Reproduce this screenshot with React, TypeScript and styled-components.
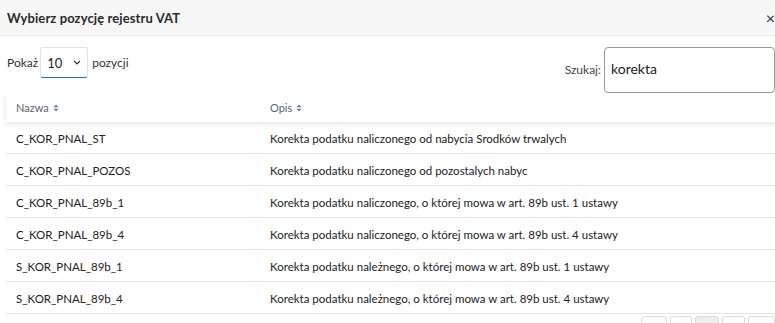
import React from "react";
import styled, { createGlobalStyle } from "styled-components";

const Global = createGlobalStyle`
  html, body { margin: 0; padding: 0; background: #fff; overflow: hidden; }
  body { font-family: "Lato", "Open Sans", sans-serif; color: #222; }
  * { box-sizing: border-box; }
`;

const Modal = styled.div`
  width: 778px;
  height: 323px;
  overflow: hidden;
  background: #fff;
`;

const Header = styled.div`
  height: 36px;
  display: flex;
  align-items: center;
  justify-content: space-between;
  padding: 0 3px 0 7px;
  background: #f7f7f7;
  border-bottom: 1px solid #e9e9e9;
`;

const Title = styled.h4`
  margin: 0;
  font-size: 13px;
  font-weight: 700;
  color: #2b2b2b;
  letter-spacing: 0.1px;
`;

const Close = styled.span`
  font-size: 16px;
  color: #333;
  line-height: 1;
`;

const Body = styled.div`
  padding: 11px 3px 0 6px;
`;

const Controls = styled.div`
  display: flex;
  justify-content: space-between;
  align-items: flex-start;
`;

const Group = styled.label`
  display: flex;
  align-items: center;
  font-size: 12px;
  color: #333;
  padding-left: 1px;
`;

const SelectBox = styled.div`
  width: 48px;
  height: 31px;
  border: 1px solid #e3e3e3;
  border-bottom: 1px solid #1c6db5;
  border-radius: 3px;
  display: flex;
  align-items: center;
  justify-content: space-between;
  padding: 0 6px 0 6px;
  font-size: 13px;
  color: #222;
  margin: 0 4px 0 2px;
`;

const SearchGroup = styled.div`
  display: flex;
  align-items: flex-start;
`;

const SearchLabel = styled.span`
  font-size: 12px;
  color: #444;
  margin-top: 15px;
`;

const SearchInput = styled.div`
  width: 171px;
  height: 46px;
  border: 1px solid #9a9a9a;
  border-radius: 4px;
  padding: 12px 0 0 6px;
  font-size: 14px;
  color: #222;
  margin-left: 3px;
`;

const Table = styled.div`
  width: 772px;
`;

const HeadRow = styled.div`
  display: grid;
  grid-template-columns: 254px 1fr;
  height: 29px;
  align-items: center;
  background: #fff;
  box-shadow: 0 2px 5px rgba(0, 0, 0, 0.1);
  position: relative;
`;

const HeadCell = styled.div`
  padding-left: 10px;
  font-size: 11px;
  color: #5c6470;
  display: flex;
  align-items: center;
  gap: 4px;
`;

const Row = styled.div`
  display: grid;
  grid-template-columns: 254px 1fr;
  height: 32px;
  align-items: center;
  border-bottom: 1px solid #e4e4e4;
  font-size: 11.5px;
  color: #222;
`;

const Cell = styled.div`
  padding-left: 10px;
  padding-top: 1px;
`;

const Pager = styled.div`
  display: flex;
  justify-content: flex-end;
  gap: 3px;
  margin-top: 2px;
`;

const PageBtn = styled.div<{ $w: number; $active?: boolean }>`
  width: ${(p) => p.$w}px;
  height: 24px;
  border: 1px solid #dcdcdc;
  border-radius: 3px;
  background: ${(p) => (p.$active ? "#eeeeee" : "#fff")};
`;

const SortIcon = () => (
  <svg width="6" height="8" viewBox="0 0 6 8">
    <path d="M3 0.5 L5.5 3.3 H0.5 Z" fill="#6a7a9a" />
    <path d="M3 7.5 L5.5 4.7 H0.5 Z" fill="#6a7a9a" />
  </svg>
);

const Chevron = () => (
  <svg width="8" height="5" viewBox="0 0 8 5">
    <path d="M1 1 L4 4 L7 1" stroke="#333" strokeWidth="1.2" fill="none" />
  </svg>
);

const rows: [string, string][] = [
  ["C_KOR_PNAL_ST", "Korekta podatku naliczonego od nabycia Srodków trwalych"],
  ["C_KOR_PNAL_POZOS", "Korekta podatku naliczonego od pozostalych nabyc"],
  ["C_KOR_PNAL_89b_1", "Korekta podatku naliczonego, o której mowa w art. 89b ust. 1 ustawy"],
  ["C_KOR_PNAL_89b_4", "Korekta podatku naliczonego, o której mowa w art. 89b ust. 4 ustawy"],
  ["S_KOR_PNAL_89b_1", "Korekta podatku należnego, o której mowa w art. 89b ust. 1 ustawy"],
  ["S_KOR_PNAL_89b_4", "Korekta podatku należnego, o której mowa w art. 89b ust. 4 ustawy"],
];

const pages = [
  { w: 26 },
  { w: 22 },
  { w: 24, active: true },
  { w: 23 },
  { w: 27 },
];

export default function App() {
  return (
    <>
      <Global />
      <Modal>
        <Header>
          <Title>Wybierz pozycję rejestru VAT</Title>
          <Close>×</Close>
        </Header>
        <Body>
          <Controls>
            <Group>
              Pokaż
              <SelectBox>
                <span>10</span>
                <Chevron />
              </SelectBox>
              pozycji
            </Group>
            <SearchGroup>
              <SearchLabel>Szukaj:</SearchLabel>
              <SearchInput>korekta</SearchInput>
            </SearchGroup>
          </Controls>
          <Table>
            <HeadRow>
              <HeadCell>
                Nazwa <SortIcon />
              </HeadCell>
              <HeadCell>
                Opis <SortIcon />
              </HeadCell>
            </HeadRow>
            {rows.map(([n, d]) => (
              <Row key={n}>
                <Cell>{n}</Cell>
                <Cell>{d}</Cell>
              </Row>
            ))}
          </Table>
          <Pager>
            {pages.map((p, i) => (
              <PageBtn key={i} $w={p.w} $active={p.active} />
            ))}
          </Pager>
        </Body>
      </Modal>
    </>
  );
}
